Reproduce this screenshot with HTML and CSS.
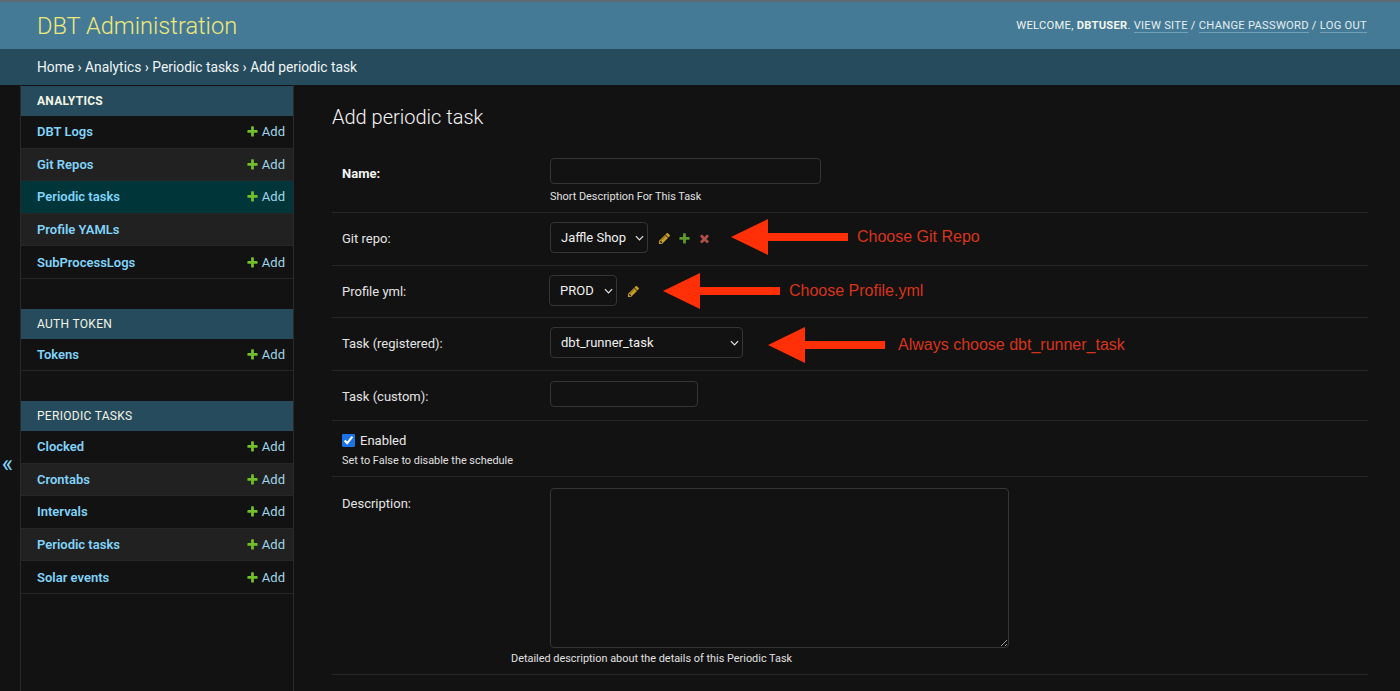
FILE: index.html

```html
<!DOCTYPE html>
<html lang="en">
<head>
    <meta charset="UTF-8">
    <title>Add periodic task | DBT Administration</title>
    <link rel="stylesheet" href="styles.css">
</head>
<body>

<div class="header">
    <div class="branding">DBT Administration</div>
    <div class="user-tools">
        WELCOME, <strong>DBTUSER</strong>. <a href="#">VIEW SITE</a> / <a href="#">CHANGE PASSWORD</a> / <a href="#">LOG OUT</a>
    </div>
</div>

<div class="breadcrumbs">Home › Analytics › Periodic tasks › Add periodic task</div>

<div class="main">
    <button class="toggle-nav">«</button>

    <div class="sidebar">
        <div class="app">
            <div class="caption current">ANALYTICS</div>
            <div class="model"><a href="#">DBT Logs</a><span class="addlink"><svg class="plus" viewBox="0 0 1792 1792"><path d="M1600 796v192q0 40-28 68t-68 28h-416v416q0 40-28 68t-68 28h-192q-40 0-68-28t-28-68v-416h-416q-40 0-68-28t-28-68v-192q0-40 28-68t68-28h416v-416q0-40 28-68t68-28h192q40 0 68 28t28 68v416h416q40 0 68 28t28 68z"/></svg>Add</span></div>
            <div class="model alt"><a href="#">Git Repos</a><span class="addlink"><svg class="plus" viewBox="0 0 1792 1792"><path d="M1600 796v192q0 40-28 68t-68 28h-416v416q0 40-28 68t-68 28h-192q-40 0-68-28t-28-68v-416h-416q-40 0-68-28t-28-68v-192q0-40 28-68t68-28h416v-416q0-40 28-68t68-28h192q40 0 68 28t28 68v416h416q40 0 68 28t28 68z"/></svg>Add</span></div>
            <div class="model selected"><a href="#">Periodic tasks</a><span class="addlink"><svg class="plus" viewBox="0 0 1792 1792"><path d="M1600 796v192q0 40-28 68t-68 28h-416v416q0 40-28 68t-68 28h-192q-40 0-68-28t-28-68v-416h-416q-40 0-68-28t-28-68v-192q0-40 28-68t68-28h416v-416q0-40 28-68t68-28h192q40 0 68 28t28 68v416h416q40 0 68 28t28 68z"/></svg>Add</span></div>
            <div class="model alt"><a href="#">Profile YAMLs</a></div>
            <div class="model"><a href="#">SubProcessLogs</a><span class="addlink"><svg class="plus" viewBox="0 0 1792 1792"><path d="M1600 796v192q0 40-28 68t-68 28h-416v416q0 40-28 68t-68 28h-192q-40 0-68-28t-28-68v-416h-416q-40 0-68-28t-28-68v-192q0-40 28-68t68-28h416v-416q0-40 28-68t68-28h192q40 0 68 28t28 68v416h416q40 0 68 28t28 68z"/></svg>Add</span></div>
        </div>
        <div class="app">
            <div class="caption">AUTH TOKEN</div>
            <div class="model"><a href="#">Tokens</a><span class="addlink"><svg class="plus" viewBox="0 0 1792 1792"><path d="M1600 796v192q0 40-28 68t-68 28h-416v416q0 40-28 68t-68 28h-192q-40 0-68-28t-28-68v-416h-416q-40 0-68-28t-28-68v-192q0-40 28-68t68-28h416v-416q0-40 28-68t68-28h192q40 0 68 28t28 68v416h416q40 0 68 28t28 68z"/></svg>Add</span></div>
        </div>
        <div class="app">
            <div class="caption">PERIODIC TASKS</div>
            <div class="model"><a href="#">Clocked</a><span class="addlink"><svg class="plus" viewBox="0 0 1792 1792"><path d="M1600 796v192q0 40-28 68t-68 28h-416v416q0 40-28 68t-68 28h-192q-40 0-68-28t-28-68v-416h-416q-40 0-68-28t-28-68v-192q0-40 28-68t68-28h416v-416q0-40 28-68t68-28h192q40 0 68 28t28 68v416h416q40 0 68 28t28 68z"/></svg>Add</span></div>
            <div class="model alt"><a href="#">Crontabs</a><span class="addlink"><svg class="plus" viewBox="0 0 1792 1792"><path d="M1600 796v192q0 40-28 68t-68 28h-416v416q0 40-28 68t-68 28h-192q-40 0-68-28t-28-68v-416h-416q-40 0-68-28t-28-68v-192q0-40 28-68t68-28h416v-416q0-40 28-68t68-28h192q40 0 68 28t28 68v416h416q40 0 68 28t28 68z"/></svg>Add</span></div>
            <div class="model"><a href="#">Intervals</a><span class="addlink"><svg class="plus" viewBox="0 0 1792 1792"><path d="M1600 796v192q0 40-28 68t-68 28h-416v416q0 40-28 68t-68 28h-192q-40 0-68-28t-28-68v-416h-416q-40 0-68-28t-28-68v-192q0-40 28-68t68-28h416v-416q0-40 28-68t68-28h192q40 0 68 28t28 68v416h416q40 0 68 28t28 68z"/></svg>Add</span></div>
            <div class="model alt"><a href="#">Periodic tasks</a><span class="addlink"><svg class="plus" viewBox="0 0 1792 1792"><path d="M1600 796v192q0 40-28 68t-68 28h-416v416q0 40-28 68t-68 28h-192q-40 0-68-28t-28-68v-416h-416q-40 0-68-28t-28-68v-192q0-40 28-68t68-28h416v-416q0-40 28-68t68-28h192q40 0 68 28t28 68v416h416q40 0 68 28t28 68z"/></svg>Add</span></div>
            <div class="model"><a href="#">Solar events</a><span class="addlink"><svg class="plus" viewBox="0 0 1792 1792"><path d="M1600 796v192q0 40-28 68t-68 28h-416v416q0 40-28 68t-68 28h-192q-40 0-68-28t-28-68v-416h-416q-40 0-68-28t-28-68v-192q0-40 28-68t68-28h416v-416q0-40 28-68t68-28h192q40 0 68 28t28 68v416h416q40 0 68 28t28 68z"/></svg>Add</span></div>
        </div>
    </div>

    <div class="content">
        <h1>Add periodic task</h1>

        <div class="form-row row-name">
            <label class="field-label required">Name:</label>
            <div class="field">
                <input class="text-input input-name" type="text">
                <div class="help">Short Description For This Task</div>
            </div>
        </div>

        <div class="form-row row-select">
            <label class="field-label">Git repo:</label>
            <div class="field inline">
                <div class="select-wrap wrap-git">
                    <select><option>Jaffle Shop</option></select>
                    <svg class="chevron" viewBox="0 0 10 6"><path d="M1 1l4 4 4-4"/></svg>
                </div>
                <a class="rel-link first" href="#"><svg class="pencil" viewBox="0 0 1792 1792"><path d="M491 1536l91-91-235-235-91 91v107h128v128h107zm523-928q0-22-22-22-10 0-17 7l-542 542q-7 7-7 17 0 22 22 22 10 0 17-7l542-542q7-7 7-17zm-54-192l416 416-832 832h-416v-416zm683 96q0 53-37 90l-166 166-416-416 166-165q36-38 90-38 53 0 91 38l235 234q37 39 37 91z"/></svg></a>
                <a class="rel-link" href="#"><svg class="form-plus" viewBox="0 0 1792 1792"><path d="M1600 796v192q0 40-28 68t-68 28h-416v416q0 40-28 68t-68 28h-192q-40 0-68-28t-28-68v-416h-416q-40 0-68-28t-28-68v-192q0-40 28-68t68-28h416v-416q0-40 28-68t68-28h192q40 0 68 28t28 68v416h416q40 0 68 28t28 68z"/></svg></a>
                <a class="rel-link" href="#"><svg class="cross" viewBox="0 0 1792 1792"><path d="M1490 1322q0 40-28 68l-136 136q-28 28-68 28t-68-28l-294-294-294 294q-28 28-68 28t-68-28l-136-136q-28-28-28-68t28-68l294-294-294-294q-28-28-28-68t28-68l136-136q28-28 68-28t68 28l294 294 294-294q28-28 68-28t68 28l136 136q28 28 28 68t-28 68l-294 294 294 294q28 28 28 68z"/></svg></a>
                <div class="note note-git">
                    <svg class="arrow" viewBox="0 0 117 36"><path d="M0 18L37 0v14h80v8H37v14z"/></svg>
                    <span>Choose Git Repo</span>
                </div>
            </div>
        </div>

        <div class="form-row row-select">
            <label class="field-label">Profile yml:</label>
            <div class="field inline">
                <div class="select-wrap wrap-profile">
                    <select><option>PROD</option></select>
                    <svg class="chevron" viewBox="0 0 10 6"><path d="M1 1l4 4 4-4"/></svg>
                </div>
                <a class="rel-link first" href="#"><svg class="pencil" viewBox="0 0 1792 1792"><path d="M491 1536l91-91-235-235-91 91v107h128v128h107zm523-928q0-22-22-22-10 0-17 7l-542 542q-7 7-7 17 0 22 22 22 10 0 17-7l542-542q7-7 7-17zm-54-192l416 416-832 832h-416v-416zm683 96q0 53-37 90l-166 166-416-416 166-165q36-38 90-38 53 0 91 38l235 234q37 39 37 91z"/></svg></a>
                <div class="note note-profile">
                    <svg class="arrow" viewBox="0 0 117 36"><path d="M0 18L37 0v14h80v8H37v14z"/></svg>
                    <span>Choose Profile.yml</span>
                </div>
            </div>
        </div>

        <div class="form-row row-select">
            <label class="field-label">Task (registered):</label>
            <div class="field inline">
                <div class="select-wrap wrap-task">
                    <select><option>dbt_runner_task</option></select>
                    <svg class="chevron" viewBox="0 0 10 6"><path d="M1 1l4 4 4-4"/></svg>
                </div>
                <div class="note note-task">
                    <svg class="arrow" viewBox="0 0 117 36"><path d="M0 18L37 0v14h80v8H37v14z"/></svg>
                    <span>Always choose dbt_runner_task</span>
                </div>
            </div>
        </div>

        <div class="form-row row-custom">
            <label class="field-label">Task (custom):</label>
            <div class="field">
                <input class="text-input input-custom" type="text">
            </div>
        </div>

        <div class="form-row row-check">
            <label class="check-label"><input type="checkbox" checked> Enabled</label>
            <div class="help">Set to False to disable the schedule</div>
        </div>

        <div class="form-row row-desc">
            <label class="field-label">Description:</label>
            <div class="field">
                <textarea></textarea>
                <div class="help help-desc">Detailed description about the details of this Periodic Task</div>
            </div>
        </div>
    </div>
</div>

</body>
</html>
```

FILE: styles.css

```css
* {
    box-sizing: border-box;
}

html, body {
    height: 100%;
}

body {
    margin: 0;
    background-color: #121212;
    color: #eeeeee;
    font-family: Roboto, "Liberation Sans", sans-serif;
    font-size: 14px;
    overflow: hidden;
}

a {
    text-decoration: none;
}

.header {
    height: 49px;
    padding: 0 33px 0 37px;
    display: flex;
    align-items: center;
    justify-content: space-between;
    background-color: #457a96;
    border-top: 2px solid #5d6a74;
}

.branding {
    font-size: 23.6px;
    font-weight: 300;
    color: #f0e878;
}

.user-tools {
    font-size: 11.2px;
    letter-spacing: 0.26px;
    color: #f0f5ee;
}

.user-tools strong {
    font-weight: 700;
}

.user-tools a {
    color: #e3eef2;
    border-bottom: 1px solid #78a0b4;
}

.breadcrumbs {
    height: 36px;
    padding-left: 37px;
    display: flex;
    align-items: center;
    background-color: #264b5d;
    font-size: 13.8px;
    color: #eef5f7;
}

.main {
    display: flex;
    height: calc(100% - 85px);
}

.toggle-nav {
    width: 20px;
    flex: none;
    padding: 152px 5px 0 0;
    border: 0;
    background: #121212;
    color: #81d4fa;
    font-family: Roboto, sans-serif;
    font-size: 24px;
    line-height: 1;
}

.sidebar {
    width: 274px;
    flex: none;
    border-left: 1px solid #2a2a2a;
    border-right: 1px solid #2a2a2a;
    padding-top: 1px;
}

.app {
    margin-bottom: 29.7px;
}

.caption {
    height: 30px;
    padding-left: 16px;
    display: flex;
    align-items: center;
    background-color: #264b5d;
    color: #f2f4e4;
    font-size: 12px;
    letter-spacing: 0.3px;
}

.caption.current {
    font-weight: 700;
}

.model {
    height: 32.6px;
    padding: 0 8px 0 16px;
    display: flex;
    align-items: center;
    justify-content: space-between;
    border-bottom: 1px solid #272727;
    font-size: 13px;
}

.model a {
    color: #81d4fa;
    font-weight: 600;
}

.model.alt {
    background-color: #212121;
}

.model.selected {
    background-color: #00363a;
}

.addlink {
    display: flex;
    align-items: center;
    gap: 3px;
    color: #9fd6ea;
}

.plus {
    width: 13px;
    height: 13px;
    fill: #70bf2b;
}

.content {
    flex: 1;
    padding: 0 32px 0 38px;
    min-width: 0;
}

h1 {
    margin: 20px 0 19px;
    height: 24px;
    line-height: 24px;
    font-size: 20px;
    font-weight: 300;
    color: #f5f5f5;
}

.form-row {
    padding: 10px;
    display: flex;
    border-bottom: 1px solid #272727;
    font-size: 13px;
}

.field-label {
    width: 208px;
    flex: none;
    color: #e4e4e4;
}

.field-label.required {
    font-weight: 700;
    color: #f5f5f5;
}

.field.inline {
    display: flex;
    align-items: center;
}

.row-name {
    height: 65px;
}

.row-name .field-label {
    padding-top: 8px;
}

.row-select {
    height: 52.6px;
    align-items: center;
}

.row-custom {
    height: 50px;
}

.row-custom .field-label {
    padding-top: 8px;
}

.row-check {
    height: 56px;
    padding-top: 12px;
    flex-direction: column;
}

.row-desc {
    height: 198px;
    padding-top: 11px;
}

.row-desc .field-label {
    padding-top: 8px;
}

.text-input, textarea, select {
    background-color: #121212;
    border: 1px solid #353535;
    border-radius: 4px;
    color: #f0f0f0;
    display: block;
}

.text-input {
    height: 26px;
}

.input-name {
    width: 271px;
}

.input-custom {
    width: 148px;
}

textarea {
    width: 459px;
    height: 160px;
}

.help {
    margin-top: 6px;
    font-size: 10.9px;
    line-height: 14px;
    color: #e0e0e0;
}

.help-desc {
    margin-top: 4px;
    margin-left: -39px;
}

.select-wrap {
    position: relative;
    margin-bottom: 2px;
}

select {
    width: 100%;
    height: 31px;
    padding: 0 0 0 10px;
    appearance: none;
    font-family: inherit;
    font-size: 13px;
}

.chevron {
    position: absolute;
    right: 4px;
    top: 13px;
    width: 9px;
    height: 6px;
    fill: none;
    stroke: #e8e8e8;
    stroke-width: 1.3;
}

.wrap-git {
    width: 98px;
}

.wrap-profile {
    width: 68px;
    margin-left: -1px;
}

.wrap-task {
    width: 193px;
}

.rel-link {
    display: flex;
    margin-left: 7px;
}

.rel-link.first {
    margin-left: 10px;
}

.rel-link svg {
    width: 13px;
    height: 13px;
}

.pencil {
    fill: #c99f2a;
}

.form-plus {
    fill: #5c9a2c;
}

.cross {
    fill: #b04e4e;
}

.note {
    display: flex;
    align-items: center;
    color: #d8341a;
    font-family: "Liberation Sans", Arial, sans-serif;
    font-size: 16px;
}

.arrow {
    width: 117px;
    height: 36px;
    fill: #ff3008;
    flex: none;
}

.note span {
    margin-left: 9px;
}

.note-git {
    margin-left: 20px;
    margin-top: -4px;
}

.note-profile {
    margin-left: 23px;
    margin-top: 0;
}

.note-task {
    margin-left: 25px;
    margin-top: 3px;
}

.note-task span {
    margin-left: 13px;
}

.check-label {
    display: flex;
    align-items: center;
    gap: 5px;
    height: 20px;
    color: #e8e8e8;
}

.check-label input {
    margin: 0;
    width: 13px;
    height: 13px;
    accent-color: #1a73e8;
}

.row-check .help {
    margin-top: 6px;
}
```
